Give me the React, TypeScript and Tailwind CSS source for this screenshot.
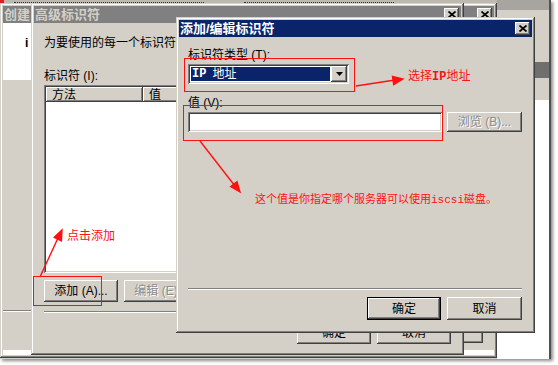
const winEdge =
  "shadow-[inset_-1px_-1px_#404040,inset_1px_1px_#d4d0c8,inset_-2px_-2px_#808080,inset_2px_2px_#ffffff]";
const btnEdge =
  "shadow-[inset_-1px_-1px_#404040,inset_1px_1px_#ffffff,inset_-2px_-2px_#808080,inset_2px_2px_#d4d0c8]";
const sunkEdge =
  "shadow-[inset_1px_1px_#808080,inset_-1px_-1px_#ffffff,inset_2px_2px_#404040,inset_-2px_-2px_#d4d0c8]";

const CloseBtn = () => (
  <div className={`w-[15px] h-[13px] shrink-0 bg-[#d4d0c8] ${btnEdge} flex items-center justify-center`}>
    <svg width="8" height="7" viewBox="0 0 8 7">
      <path d="M0.5 0.5L7.5 6.5M7.5 0.5L0.5 6.5" stroke="#000" strokeWidth="1.7" />
    </svg>
  </div>
);

const Btn = ({
  children,
  className = "",
  disabled = false,
}: {
  children: React.ReactNode;
  className?: string;
  disabled?: boolean;
}) => (
  <div
    className={`shrink-0 bg-[#d4d0c8] ${btnEdge} flex items-center justify-center text-[12px] ${
      disabled ? "text-[#8c8c8c] [text-shadow:1px_1px_0_#ffffff]" : "text-black"
    } ${className}`}
  >
    {children}
  </div>
);

const Separator = ({ className = "" }: { className?: string }) => (
  <div className={`h-[2px] shrink-0 border-t border-[#808080] border-b border-b-white ${className}`} />
);

const TitleBar = ({ title, active = false }: { title: string; active?: boolean }) => (
  <div
    className={`h-[17px] shrink-0 flex items-center justify-between pl-[1px] pr-[2px] ${
      active ? "bg-[#0a246a] text-white" : "bg-[#808080] text-[#d4d0c8]"
    }`}
  >
    <span className="text-[13px] font-bold whitespace-nowrap">{title}</span>
    <CloseBtn />
  </div>
);

export default function App() {
  return (
    <div className="relative w-[558px] h-[365px] bg-white overflow-hidden font-['Liberation_Sans','Noto_Sans_CJK_SC',sans-serif] text-[12px] text-black leading-[14px]">
      {/* screenshot frame */}
      <div className="absolute left-0 top-0 w-[551px] h-[359px] bg-[#d4d0c8] shadow-[2px_2px_3px_rgba(0,0,0,0.45)]">
        {/* window behind, only a sliver of it shows */}
        <div className="absolute left-0 top-0 w-[497px] h-[3px] bg-[#bdb9b1] flex items-end gap-[40px] pl-[14px]">
          <div className="absolute left-0 top-0 w-[4px] h-[3px] bg-[#e02020]" />
          <div className="h-[2px] w-[190px] border-b border-dotted border-[#303030]" />
          <div className="h-[2px] w-[150px] border-b border-dotted border-[#303030]" />
        </div>

        {/* right-hand strip of another window */}
        <div className="absolute left-[497px] top-0 w-[54px] h-[359px] flex flex-col border-r-2 border-[#505050]">
          <div className="h-[10px] bg-[#a8a4a0]" />
          <div className="h-[52px] bg-[#d4d0c8]" />
          <div className="h-[16px] bg-[#6f6f6f]" />
          <div className="h-[22px] bg-[#d4d0c8]" />
          <div className="flex-1 bg-white" />
        </div>

        {/* window A: 创建 */}
        <div className={`absolute left-0 top-[3px] w-[497px] h-[355px] bg-[#d4d0c8] ${winEdge} p-[3px] flex flex-col`}>
          <TitleBar title="创建" />
          <div className="h-[57px] shrink-0 bg-white pl-[22px] pt-[13px] text-[12px] font-bold">i</div>
          <div className="flex-1" />
          <Separator />
          <div className="flex justify-end pr-[11px] pt-[8px] pb-[7px]">
            <Btn className="w-[74px] h-[23px]">取消</Btn>
          </div>
          <div className="h-[5px] shrink-0 flex">
            <div className="w-[244px] bg-white" />
            <div className="w-[5px] bg-[#a0a0a0]" />
            <div className="flex-1 bg-white" />
          </div>
        </div>

        {/* window B: 高级标识符 */}
        <div className={`absolute left-[31px] top-[3px] w-[433px] h-[352px] bg-[#d4d0c8] ${winEdge} p-[3px] flex flex-col`}>
          <TitleBar title="高级标识符" />
          <div className="px-[10px] flex flex-col">
            <div className="mt-[13px] whitespace-nowrap">为要使用的每一个标识符</div>
            <div className="mt-[19px]">标识符 (I):</div>
            <div className={`mt-[2px] h-[188px] bg-white ${sunkEdge} p-[2px]`}>
              <div className="flex h-[15px]">
                <div className={`w-[97px] bg-[#d4d0c8] ${btnEdge} pl-[6px] flex items-center`}>方法</div>
                <div className={`w-[200px] bg-[#d4d0c8] ${btnEdge} pl-[6px] flex items-center`}>值</div>
              </div>
            </div>
            <div className="mt-[7px] flex gap-[6px]">
              <Btn className="w-[74px] h-[22px]">添加 (A)...</Btn>
              <Btn className="w-[74px] h-[22px]" disabled>
                编辑 (E)...
              </Btn>
            </div>
            <Separator className="mt-[9px]" />
            <div className="mt-[8px] flex justify-end gap-[6px]">
              <Btn className="w-[74px] h-[23px]">确定</Btn>
              <Btn className="w-[74px] h-[23px]">取消</Btn>
            </div>
          </div>
        </div>

        {/* window C: 添加/编辑标识符 (active) */}
        <div className={`absolute left-[176px] top-[17px] w-[359px] h-[316px] bg-[#d4d0c8] ${winEdge} p-[3px] flex flex-col`}>
          <TitleBar title="添加/编辑标识符" active />
          <div className="pl-[9px] pr-[10px] flex flex-col">
            <div className="mt-[11px]">标识符类型 (T):</div>
            <div className={`mt-[2px] w-[161px] h-[20px] bg-white ${sunkEdge} p-[2px] flex`}>
              <div className="flex-1 m-[1px] bg-[#0a246a] text-white flex items-center pl-[1px] text-[12px]">
                <span className="font-['Liberation_Mono',monospace] font-bold">IP</span>
                <span className="ml-[6px]">地址</span>
              </div>
              <div className={`w-[16px] bg-[#d4d0c8] ${btnEdge} flex items-center justify-center`}>
                <svg width="7" height="4" viewBox="0 0 7 4">
                  <path d="M0 0h7L3.5 4z" fill="#000" />
                </svg>
              </div>
            </div>
            <div className="mt-[12px]">值 (V):</div>
            <div className="mt-[2px] flex gap-[5px]">
              <div className={`w-[254px] h-[20px] bg-white ${sunkEdge}`} />
              <Btn className="w-[75px] h-[20px]" disabled>
                浏览 (B)...
              </Btn>
            </div>
            <Separator className="mt-[156px]" />
            <div className="mt-[7px] flex justify-end gap-[6px]">
              <div className="border border-black">
                <Btn className="w-[72px] h-[21px]">确定</Btn>
              </div>
              <Btn className="w-[75px] h-[23px]">取消</Btn>
            </div>
          </div>
        </div>
      </div>

      {/* red annotations */}
      <div className="absolute left-[184px] top-[58px] w-[171px] h-[34px] border border-[#ff1010]" />
      <div className="absolute left-[183px] top-[105px] w-[260px] h-[36px] border border-[#ff1010]" />
      <div className="absolute left-[33px] top-[276px] w-[69px] h-[30px] border border-[#ff1010]" />

      <svg className="absolute left-0 top-0 pointer-events-none" width="558" height="365">
        <g stroke="#ff1010" strokeWidth="1.4" fill="#ff1010">
          <line x1="356" y1="86" x2="395" y2="80" />
          <polygon points="403,79 393.7,84.5 392.5,76.5" />
          <line x1="200" y1="141" x2="235" y2="186" />
          <polygon points="240,192 230.7,186.6 237,181.6" />
          <line x1="40" y1="277" x2="58" y2="238" />
          <polygon points="62,230 61.4,240.8 54.2,237.4" />
        </g>
      </svg>

      <div className="absolute left-[408px] top-[69px] text-[12px] text-[#ff1010] whitespace-nowrap">
        选择<span className="font-['Liberation_Mono',monospace] font-bold">IP</span>地址
      </div>
      <div className="absolute left-[67px] top-[229px] text-[12px] text-[#ff1010] whitespace-nowrap">点击添加</div>
      <div className="absolute left-[255px] top-[192px] text-[11px] text-[#ff1010] whitespace-nowrap">
        这个值是你指定哪个服务器可以使用<span className="font-['Liberation_Mono',monospace]">iscsi</span>磁盘。
      </div>
    </div>
  );
}
